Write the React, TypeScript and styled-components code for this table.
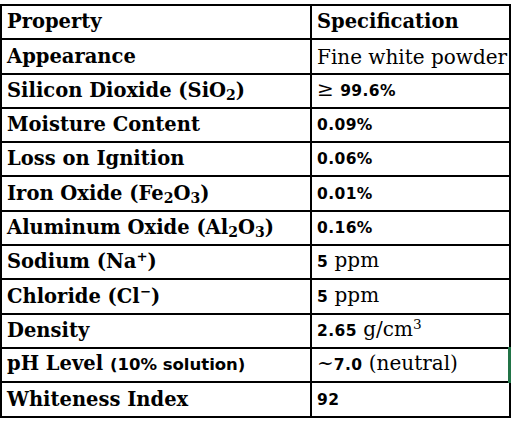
import React from "react";
import styled, { createGlobalStyle } from "styled-components";

const GlobalStyle = createGlobalStyle`
  html, body {
    margin: 0;
    padding: 0;
    background: #ffffff;
  }
`;

type Part = { text: string; kind?: "num" | "sub" | "sup" | "note" };

type SpecRow = {
  label: Part[];
  value: Part[];
  selected?: boolean;
};

const rows: SpecRow[] = [
  { label: [{ text: "Appearance" }], value: [{ text: "Fine white powder" }] },
  {
    label: [
      { text: "Silicon Dioxide (SiO" },
      { text: "2", kind: "sub" },
      { text: ")" },
    ],
    value: [{ text: "≥ " }, { text: "99.6%", kind: "num" }],
  },
  { label: [{ text: "Moisture Content" }], value: [{ text: "0.09%", kind: "num" }] },
  { label: [{ text: "Loss on Ignition" }], value: [{ text: "0.06%", kind: "num" }] },
  {
    label: [
      { text: "Iron Oxide (Fe" },
      { text: "2", kind: "sub" },
      { text: "O" },
      { text: "3", kind: "sub" },
      { text: ")" },
    ],
    value: [{ text: "0.01%", kind: "num" }],
  },
  {
    label: [
      { text: "Aluminum Oxide (Al" },
      { text: "2", kind: "sub" },
      { text: "O" },
      { text: "3", kind: "sub" },
      { text: ")" },
    ],
    value: [{ text: "0.16%", kind: "num" }],
  },
  {
    label: [{ text: "Sodium (Na" }, { text: "+", kind: "sup" }, { text: ")" }],
    value: [{ text: "5", kind: "num" }, { text: " ppm" }],
  },
  {
    label: [{ text: "Chloride (Cl" }, { text: "−", kind: "sup" }, { text: ")" }],
    value: [{ text: "5", kind: "num" }, { text: " ppm" }],
  },
  {
    label: [{ text: "Density" }],
    value: [{ text: "2.65", kind: "num" }, { text: " g/cm" }, { text: "3", kind: "sup" }],
  },
  {
    label: [{ text: "pH Level " }, { text: "(10% solution)", kind: "note" }],
    value: [{ text: "~" }, { text: "7.0", kind: "num" }, { text: " (neutral)" }],
    selected: true,
  },
  { label: [{ text: "Whiteness Index" }], value: [{ text: "92", kind: "num" }] },
];

const Sheet = styled.div`
  padding-top: 4px;
  width: 512px;
  height: 422px;
  box-sizing: border-box;
  overflow: hidden;
`;

const Table = styled.table`
  border-collapse: collapse;
  width: 511px;
  table-layout: fixed;
  font-family: "DejaVu Serif", "Liberation Serif", serif;
  color: #000000;
`;

const Row = styled.tr`
  height: 34.3px;
`;

const Cell = styled.td<{ $head?: boolean; $label?: boolean; $selected?: boolean }>`
  border: 2px solid #000000;
  ${(p) => (p.$selected ? "border-right: 3px solid #217346;" : "")}
  padding: 0 0 5px 5px;
  box-sizing: border-box;
  vertical-align: bottom;
  white-space: nowrap;
  overflow: hidden;
  font-size: ${(p) => (p.$label ? "19.5px" : p.$head ? "19.5px" : "20px")};
  line-height: 22px;
  font-weight: ${(p) => (p.$head || p.$label ? "bold" : "normal")};
`;

const Num = styled.span`
  font-family: "DejaVu Sans", "Verdana", sans-serif;
  font-weight: bold;
  font-size: 15.5px;
  letter-spacing: 0.4px;
`;

const Note = styled.span`
  font-family: "DejaVu Sans", sans-serif;
  font-weight: bold;
  font-size: 16.5px;
`;

const Sub = styled.span`
  font-size: 0.72em;
  line-height: 0;
  vertical-align: -0.22em;
`;

const Sup = styled.span`
  font-size: 0.68em;
  line-height: 0;
  vertical-align: 0.5em;
`;

const renderParts = (parts: Part[]) =>
  parts.map((p, i) => {
    switch (p.kind) {
      case "num":
        return <Num key={i}>{p.text}</Num>;
      case "note":
        return <Note key={i}>{p.text}</Note>;
      case "sub":
        return <Sub key={i}>{p.text}</Sub>;
      case "sup":
        return <Sup key={i}>{p.text}</Sup>;
      default:
        return <React.Fragment key={i}>{p.text}</React.Fragment>;
    }
  });

export default function App() {
  return (
    <>
      <GlobalStyle />
      <Sheet>
        <Table>
          <colgroup>
            <col style={{ width: 310 }} />
            <col />
          </colgroup>
          <tbody>
            <Row>
              <Cell $head>Property</Cell>
              <Cell $head>Specification</Cell>
            </Row>
            {rows.map((r, i) => (
              <Row key={i}>
                <Cell $label>{renderParts(r.label)}</Cell>
                <Cell $selected={r.selected}>{renderParts(r.value)}</Cell>
              </Row>
            ))}
          </tbody>
        </Table>
      </Sheet>
    </>
  );
}
